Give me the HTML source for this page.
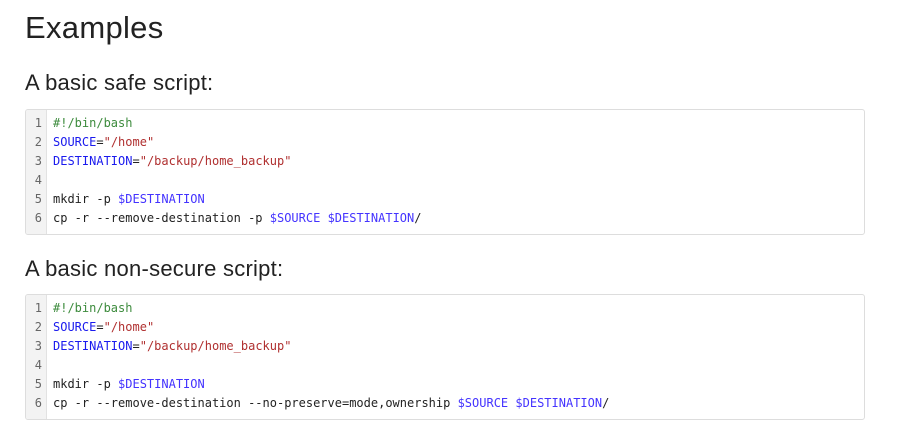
<!DOCTYPE html>
<html><head><style>
body{margin:0;background:#fff;width:903px;height:442px;overflow:hidden;position:relative;font-family:"Liberation Sans",sans-serif;color:#222}
h1,h2{position:absolute;margin:0;font-weight:normal;left:25px;white-space:nowrap}
h1{font-size:31px;top:10px;letter-spacing:0.3px}
h2{font-size:22px;top:70px;letter-spacing:0.25px}
.box{position:absolute;left:25px;width:838px;height:124px;border:1px solid #ddd;border-radius:3px;background:#fff;overflow:hidden}
.g{position:absolute;left:0;top:0;bottom:0;width:20px;background:#f3f3f3;border-right:1px solid #e2e2e2}
pre{position:absolute;margin:0;top:4px;font-family:"DejaVu Sans Mono","Liberation Mono",monospace;font-size:12px;line-height:19px}
.n{left:0;width:16px;text-align:right;color:#666}
.c{left:27px;color:#222}
.cm{color:#3d8b3d}.v{color:#1a1aee}.s{color:#b03030}.d{color:#4433ff}
</style></head><body>
<h1>Examples</h1>
<h2>A basic safe script:</h2>
<div class="box" style="top:109px"><div class="g"></div>
<pre class="n">1
2
3
4
5
6</pre>
<pre class="c"><span class="cm">#!/bin/bash</span>
<span class="v">SOURCE</span>=<span class="s">"/home"</span>
<span class="v">DESTINATION</span>=<span class="s">"/backup/home_backup"</span>

mkdir -p <span class="d">$DESTINATION</span>
cp -r --remove-destination -p <span class="d">$SOURCE</span> <span class="d">$DESTINATION</span>/</pre></div>
<h2 style="top:256px">A basic non-secure script:</h2>
<div class="box" style="top:294px"><div class="g"></div>
<pre class="n">1
2
3
4
5
6</pre>
<pre class="c"><span class="cm">#!/bin/bash</span>
<span class="v">SOURCE</span>=<span class="s">"/home"</span>
<span class="v">DESTINATION</span>=<span class="s">"/backup/home_backup"</span>

mkdir -p <span class="d">$DESTINATION</span>
cp -r --remove-destination --no-preserve=mode,ownership <span class="d">$SOURCE</span> <span class="d">$DESTINATION</span>/</pre></div>
</body></html>
